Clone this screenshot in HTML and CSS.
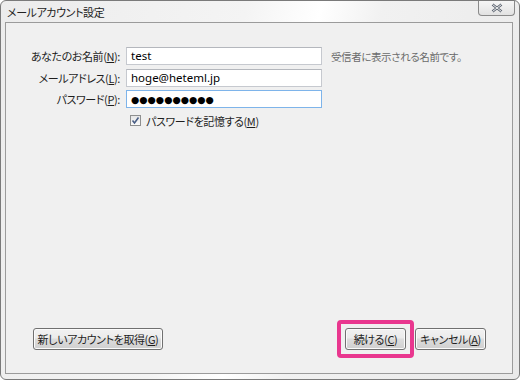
FILE: index.html
```html
<!DOCTYPE html>
<html lang="ja">
  <head>
    <meta charset="utf-8">
    <title>メールアカウント設定</title>
    <link rel="stylesheet" href="styles.css">
  </head>
  <body>

  <div class="window">
    <div class="titlebar">
      <span class="title">メールアカウント設定</span>
      <span class="close">
        <svg width="12" height="10" viewBox="0 0 12 10">
          <path d="M1.5 1.5 L10.5 8.5 M10.5 1.5 L1.5 8.5" stroke="#5c6470" stroke-width="2.6" fill="none"/>
          <path d="M1.5 1.5 L10.5 8.5 M10.5 1.5 L1.5 8.5" stroke="#ffffff" stroke-width="0.9" fill="none"/>
        </svg>
      </span>
    </div>

    <div class="panel">
      <div class="form">
        <label class="label">あなたのお名前(<u>N</u>):</label>
        <div class="field">test</div>
        <span class="hint">受信者に表示される名前です。</span>

        <label class="label">メールアドレス(<u>L</u>):</label>
        <div class="field">hoge@heteml.jp</div>
        <span></span>

        <label class="label">パスワード(<u>P</u>):</label>
        <div class="field focused"><span class="dots">●●●●●●●●●●</span></div>
        <span></span>

        <div class="remember">
          <span class="check">
            <svg width="9" height="9" viewBox="0 0 9 9">
              <path d="M1.5 4.5 L3.5 7 L7.5 1.5" stroke="#4a5f86" stroke-width="1.6" fill="none"/>
            </svg>
          </span>
          <span>パスワードを記憶する(<u>M</u>)</span>
        </div>
      </div>

      <div class="actions">
        <button class="btn btn-new">新しいアカウントを取得(<u>G</u>)</button>
        <span class="grow"></span>
        <span class="highlight"><button class="btn btn-next">続ける(<u>C</u>)</button></span>
        <button class="btn btn-cancel">キャンセル(<u>A</u>)</button>
      </div>
    </div>
  </div>

  </body>
</html>
```

FILE: styles.css
```css
html {
  height: 100%;
}
body {
  margin: 0;
  padding: 0;
  background: #ffffff;
  color: #1e1e1e;
  font-family: "Noto Sans CJK JP", sans-serif;
  font-size: 11px;
  letter-spacing: -0.4px;
  font-feature-settings: "palt";
}

.window {
  box-sizing: border-box;
  width: 520px;
  height: 380px;
  border: 1px solid #7a7a7a;
  border-radius: 6px;
  background: linear-gradient(105deg, #ececec 0%, #f4f4f4 40%, #ffffff 52%, #f1f1f1 62%, #e9e9e9 100%);
  display: flex;
  flex-direction: column;
}

.titlebar {
  height: 21px;
  display: flex;
  align-items: flex-start;
}
.title {
  margin: 4px 0 0 6px;
  font-size: 11px;
  line-height: 15px;
  color: #222;
}
.close {
  margin-left: auto;
  margin-right: 4px;
  width: 37px;
  height: 15px;
  box-sizing: border-box;
  border: 1px solid #8a8a8a;
  border-top: none;
  border-radius: 0 0 4px 4px;
  background: linear-gradient(#f6f6f6, #e2e2e2);
  display: flex;
  align-items: center;
  justify-content: center;
}

.panel {
  box-sizing: border-box;
  width: 508px;
  height: 352px;
  margin-left: 4px;
  border: 1px solid #9b9b9b;
  background: #f0f0f0;
  display: flex;
  flex-direction: column;
}

.form {
  padding-top: 24px;
  display: grid;
  grid-template-columns: 114px 196px auto;
  column-gap: 6px;
  row-gap: 3.5px;
  align-items: center;
}
.label {
  text-align: right;
  color: #1e1e1e;
  white-space: nowrap;
}
.field {
  box-sizing: border-box;
  height: 18px;
  border: 1px solid #c6c9cf;
  border-top-color: #b4b7bd;
  background: #ffffff;
  padding: 0 4px;
  font-family: "Noto Sans", sans-serif;
  font-size: 11.5px;
  letter-spacing: 0;
  line-height: 16px;
  color: #000;
}
.field.focused {
  border-color: #7eb4ea;
}
.dots {
  font-family: "DejaVu Sans", sans-serif;
  font-size: 9.5px;
}
.hint {
  margin-left: 3px;
  font-size: 10.5px;
  color: #6b6b6b;
  white-space: nowrap;
}

.remember {
  grid-column: 2 / 4;
  margin-top: 1px;
  padding-left: 4px;
  display: flex;
  align-items: center;
  gap: 5px;
}
.check {
  box-sizing: border-box;
  width: 11px;
  height: 11px;
  border: 1px solid #8e8f8f;
  background: linear-gradient(#e6e6e6, #fbfbfb);
  display: flex;
  align-items: center;
  justify-content: center;
}

.actions {
  margin-top: auto;
  padding: 0 26px 15px 27px;
  display: flex;
  align-items: center;
}
.grow {
  flex: 1;
}
.btn {
  box-sizing: border-box;
  height: 22px;
  padding: 0 2px;
  border: 1px solid #707070;
  border-radius: 3px;
  background: linear-gradient(#f2f2f2 0%, #ebebeb 45%, #dddddd 50%, #cfcfcf 100%);
  font-family: "Noto Sans CJK JP", sans-serif;
  font-size: 11px;
  letter-spacing: -0.4px;
  font-feature-settings: "palt";
  color: #1e1e1e;
  white-space: nowrap;
  box-shadow: inset 0 0 0 1px #fbfbfb;
}
.btn-new {
  width: 130px;
}
.btn-next {
  width: 61px;
}
.btn-cancel {
  width: 71px;
}
.highlight {
  display: flex;
  padding: 4px;
  border: 4px solid #e9378f;
  border-radius: 4px;
  margin-right: 1px;
}
```
